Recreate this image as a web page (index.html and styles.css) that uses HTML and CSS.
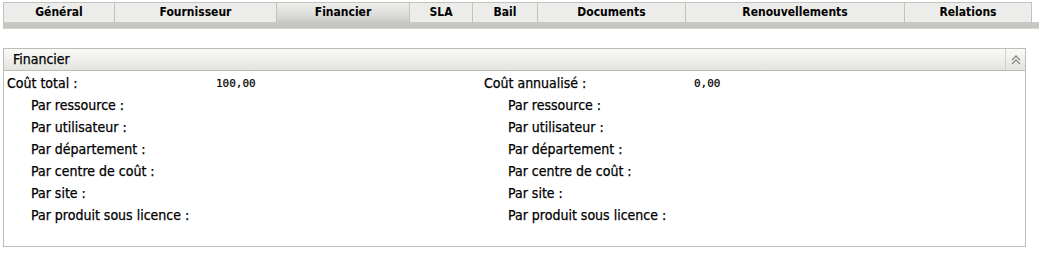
FILE: index.html
```html
<!DOCTYPE html>
<html lang="fr">
<head>
    <meta charset="UTF-8">
    <title>Contrat - Financier</title>
    <link rel="stylesheet" href="styles.css">
</head>
<body>
    <div class="tabs">
        <ul class="tab-list">
            <li class="tab">Général</li>
            <li class="tab">Fournisseur</li>
            <li class="tab active">Financier</li>
            <li class="tab">SLA</li>
            <li class="tab">Bail</li>
            <li class="tab">Documents</li>
            <li class="tab">Renouvellements</li>
            <li class="tab">Relations</li>
        </ul>
        <div class="tab-band"></div>
    </div>

    <div class="panel">
        <div class="panel-header">
            <span class="panel-title">Financier</span>
            <span class="panel-toggle">
                <svg width="10" height="10" viewBox="0 0 10 10">
                    <path d="M1 5 L5 1 L9 5 M1 9 L5 5 L9 9" fill="none" stroke="#8a8a86" stroke-width="1.3"/>
                </svg>
            </span>
        </div>
        <div class="panel-body">
            <div class="fin-grid">
                <div class="label">Coût total :</div>
                <div class="value">100,00</div>
                <div class="label">Coût annualisé :</div>
                <div class="value">0,00</div>

                <div class="label sub">Par ressource :</div>
                <div class="value"></div>
                <div class="label sub">Par ressource :</div>
                <div class="value"></div>

                <div class="label sub">Par utilisateur :</div>
                <div class="value"></div>
                <div class="label sub">Par utilisateur :</div>
                <div class="value"></div>

                <div class="label sub">Par département :</div>
                <div class="value"></div>
                <div class="label sub">Par département :</div>
                <div class="value"></div>

                <div class="label sub">Par centre de coût :</div>
                <div class="value"></div>
                <div class="label sub">Par centre de coût :</div>
                <div class="value"></div>

                <div class="label sub">Par site :</div>
                <div class="value"></div>
                <div class="label sub">Par site :</div>
                <div class="value"></div>

                <div class="label sub">Par produit sous licence :</div>
                <div class="value"></div>
                <div class="label sub">Par produit sous licence :</div>
                <div class="value"></div>
            </div>
        </div>
    </div>
</body>
</html>
```

FILE: styles.css
```css
* {
    margin: 0;
    padding: 0;
    box-sizing: border-box;
}

body {
    font-family: 'DejaVu Sans Condensed', 'DejaVu Sans', sans-serif;
    font-size: 14px;
    color: #000000;
    background: #ffffff;
    padding: 2px 4px 0 3px;
}

/* tabs */
.tabs {
    width: 1036px;
}

.tab-list {
    list-style: none;
    display: flex;
    width: 1029px;
}

.tab {
    height: 20px;
    line-height: 19px;
    text-align: center;
    font-weight: bold;
    font-size: 12px;
    background: #ececea;
    border: 1px solid #c2c2be;
    border-bottom: none;
    border-right: none;
}

.tab:last-child {
    border-right: 1px solid #c2c2be;
}

.tab:nth-child(1) { width: 111px; }
.tab:nth-child(2) { width: 162px; }
.tab:nth-child(3) { width: 133px; }
.tab:nth-child(4) { width: 63px; }
.tab:nth-child(5) { width: 65px; }
.tab:nth-child(6) { width: 148px; }
.tab:nth-child(7) { width: 219px; }
.tab:nth-child(8) { width: 128px; }

.tab.active {
    background: linear-gradient(to bottom, #efefed 0%, #d9d9d5 70%, #c9c9c5 100%);
}

.tab-band {
    height: 7px;
    background: linear-gradient(to bottom, #c9c9c5, #c3c3bf);
    border-bottom: 1px solid #d6d6d2;
}

/* panel */
.panel {
    margin-top: 19px;
    width: 1023px;
    border: 1px solid #bdbdb7;
}

.panel-header {
    display: flex;
    align-items: center;
    height: 22px;
    background: linear-gradient(to bottom, #fafaf9, #e3e3df);
    border-bottom: 1px solid #bdbdb7;
}

.panel-title {
    flex: 1;
    padding: 0 0 2px 9px;
    -webkit-text-stroke: 0.25px #000000;
}

.panel-toggle {
    width: 20px;
    height: 21px;
    border-left: 1px solid #d0d0cc;
    display: flex;
    align-items: center;
    justify-content: center;
}

.panel-body {
    padding: 1px 3px 20px 3px;
}

.fin-grid {
    display: grid;
    grid-template-columns: 209px 268px 210px 1fr;
    grid-auto-rows: 22px;
    align-items: center;
}

.label {
    -webkit-text-stroke: 0.25px #000000;
}

.label.sub {
    padding-left: 24px;
}

.value {
    font-family: 'DejaVu Sans Mono', monospace;
    font-size: 11px;
    -webkit-text-stroke: 0.2px #000000;
}
```
